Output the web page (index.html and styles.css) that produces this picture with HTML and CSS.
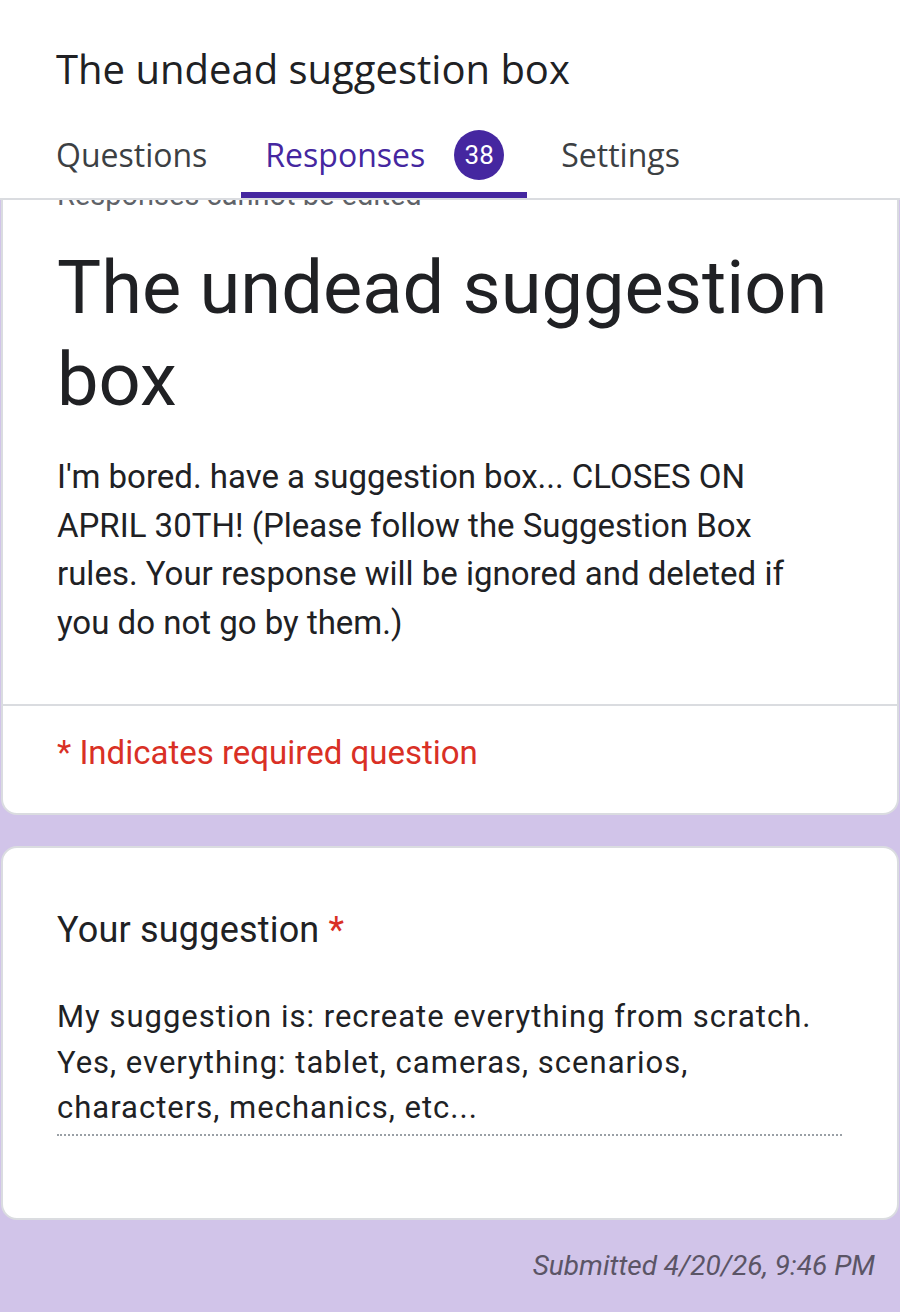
FILE: index.html
```html
<!DOCTYPE html>
<html>
  <head>
    <meta charset="UTF-8">
    <meta name="viewport" content="width=device-width, initial-scale=1">
    <title>The undead suggestion box</title>
    <link rel="stylesheet" href="styles.css">
  </head>
  <body>
    <div class="header">
      <div class="form-name">The undead suggestion box</div>
      <div class="tabs">
        <div class="tab">Questions</div>
        <div class="tab active">Responses <span class="badge">38</span></div>
        <div class="tab">Settings</div>
      </div>
    </div>
    <div class="content">
      <div class="card intro">
        <div class="notice">Responses cannot be edited</div>
        <h1 class="title">The undead suggestion box</h1>
        <p class="description">I'm bored. have a suggestion box... CLOSES ON APRIL 30TH! (Please follow the Suggestion Box rules. Your response will be ignored and deleted if you do not go by them.)</p>
        <div class="required-note">* Indicates required question</div>
      </div>
      <div class="card question">
        <div class="question-title">Your suggestion <span class="star">*</span></div>
        <div class="answer">My suggestion is: recreate everything from scratch. Yes, everything: tablet, cameras, scenarios, characters, mechanics, etc...</div>
      </div>
      <div class="submitted">Submitted 4/20/26, 9:46 PM</div>
    </div>
  </body>
</html>
```

FILE: styles.css
```css
html, body {
  margin: 0;
  height: 100%;
}
body {
  display: flex;
  flex-direction: column;
  background: #d1c4e9;
  color: #202124;
  font-family: "Roboto", "Liberation Sans", sans-serif;
}
.header {
  background: #fff;
  border-bottom: 2px solid #dadce0;
  height: 198px;
  flex: none;
  display: flex;
  flex-direction: column;
  position: relative;
  z-index: 1;
}
.form-name {
  font: 400 40px/40px "Open Sans", sans-serif;
  padding: 49px 0 0 56px;
  color: #202124;
}
.tabs {
  display: flex;
  margin-top: auto;
  padding-left: 32px;
  gap: 10px;
}
.tab {
  display: flex;
  align-items: center;
  gap: 29px;
  padding: 0 24px 8px;
  height: 78px;
  box-sizing: border-box;
  font: 500 32px/1 "Open Sans", sans-serif;
  color: #3c4043;
}
.tab.active {
  color: #4527a0;
  border-bottom: 6px solid #4527a0;
  border-radius: 6px 6px 0 0;
  padding-right: 23px;
  padding-bottom: 2px;
}
.badge {
  display: inline-flex;
  align-items: center;
  justify-content: center;
  width: 50px;
  height: 50px;
  border-radius: 50%;
  background: #4527a0;
  color: #fff;
  font: 400 26px/1 "Roboto", sans-serif;
}
.content {
  flex: 1;
  overflow: hidden;
  padding: 0 1px;
}
.card {
  background: #fff;
  border: 2px solid #dadce0;
  border-radius: 16px;
}
.intro {
  margin-top: -49px;
  padding-top: 24px;
}
.notice {
  font-size: 29px;
  line-height: 36px;
  color: #5f6368;
  padding: 0 54px;
}
.title {
  margin: 29px 0 0;
  padding: 0 54px;
  font-size: 74px;
  font-weight: 400;
  line-height: 92px;
}
.description {
  margin: 27px 0 0;
  padding: 0 64px 57px 54px;
  font-size: 33px;
  line-height: 48.5px;
  border-bottom: 2px solid #dadce0;
}
.required-note {
  padding: 27px 54px 40px;
  font-size: 33px;
  line-height: 40px;
  color: #d93025;
}
.question {
  margin-top: 31px;
  padding: 60px 55px 82px 54px;
}
.question-title {
  font-size: 36px;
  line-height: 44px;
  letter-spacing: 0.2px;
}
.star {
  color: #d93025;
}
.answer {
  margin-top: 42px;
  font-size: 31px;
  line-height: 45.5px;
  letter-spacing: 1px;
  padding-bottom: 3px;
  border-bottom: 2px dotted #9aa0a6;
}
.submitted {
  text-align: right;
  padding: 28px 24px;
  font-size: 28px;
  line-height: 36px;
  font-style: italic;
  color: #5b5566;
}
```
